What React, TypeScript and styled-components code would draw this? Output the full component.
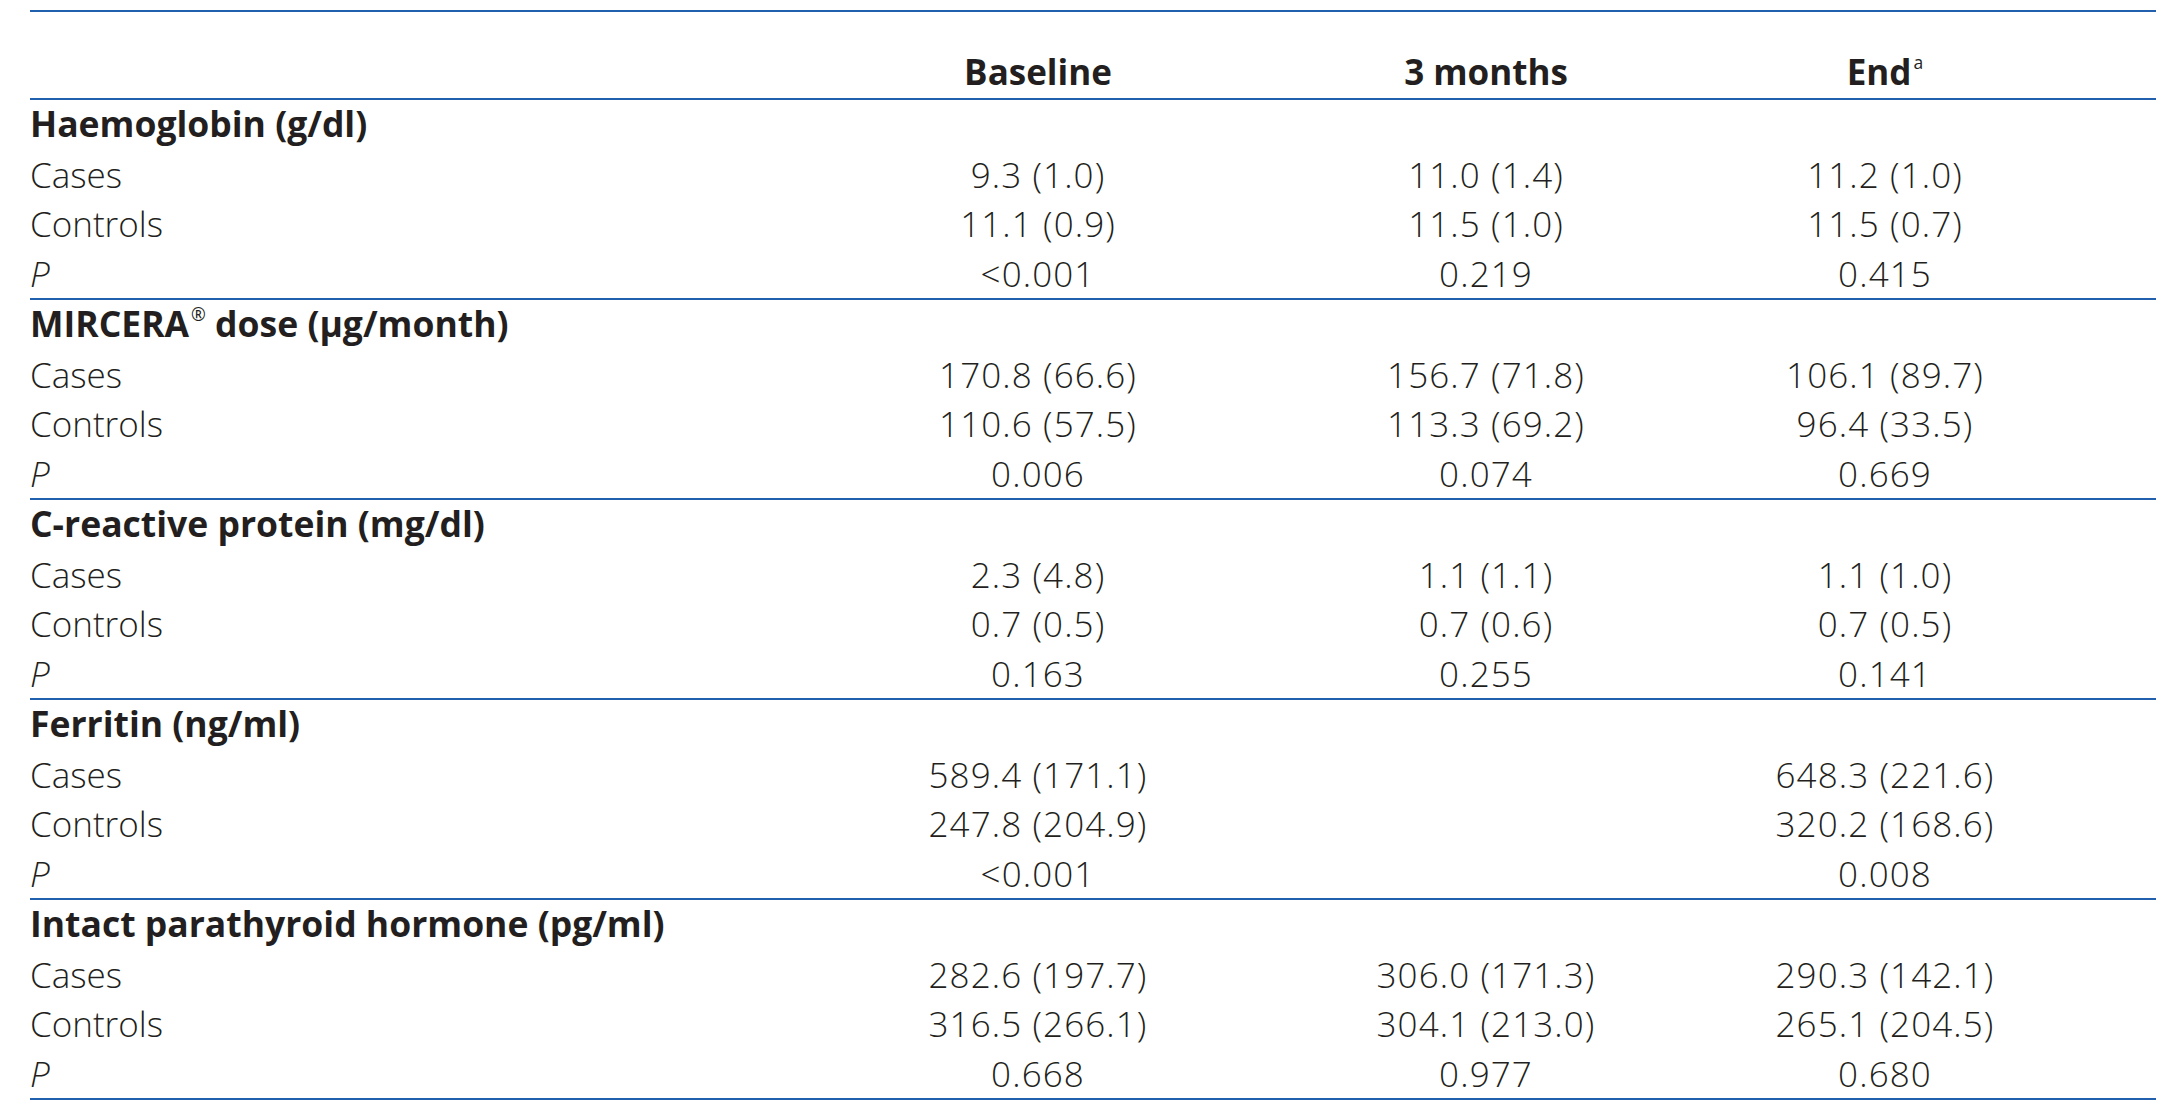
import React from 'react';
import styled, { createGlobalStyle } from 'styled-components';

const GlobalStyle = createGlobalStyle`
  html, body {
    margin: 0;
    background: #ffffff;
  }
  body {
    font-family: 'Open Sans', 'Noto Sans', sans-serif;
    color: #231f20;
  }
`;

const columns = '688px 640px 256px 542px';
const ruleColor = '#2060ac';

const TableStyled = styled.div`
  width: 2126px;
  margin: 10px 0 0 30px;
  border-top: 2px solid ${ruleColor};
`;

const HeadRow = styled.div`
  display: grid;
  grid-template-columns: ${columns};
  align-items: end;
  height: 88px;
  box-sizing: border-box;
  border-bottom: 2px solid ${ruleColor};
`;

const HeadCell = styled.div<{ $center?: boolean }>`
  font-size: 35px;
  font-weight: 700;
  line-height: 50px;
  padding-bottom: 1px;
  text-align: ${({ $center }) => ($center ? 'center' : 'left')};
  white-space: nowrap;
`;

const GroupStyled = styled.div`
  display: grid;
  grid-template-columns: ${columns};
  grid-template-rows: repeat(4, 1fr);
  height: 200px;
  box-sizing: border-box;
  border-bottom: 2px solid ${ruleColor};
`;

const GroupTitle = styled.div`
  grid-column: 1 / -1;
  font-size: 35.5px;
  font-weight: 700;
  line-height: 46px;
  white-space: nowrap;
`;

const LabelCell = styled.div<{ $italic?: boolean }>`
  font-size: 35px;
  font-weight: 350;
  line-height: 49px;
  font-style: ${({ $italic }) => ($italic ? 'italic' : 'normal')};
  white-space: nowrap;
`;

const ValueCell = styled.div`
  font-size: 35px;
  font-weight: 350;
  line-height: 49px;
  letter-spacing: 1.1px;
  text-align: center;
  white-space: nowrap;
`;

const Sup = styled.sup`
  font-size: 0.5em;
  font-weight: 400;
  vertical-align: 0.9em;
  line-height: 0;
  margin-left: 2px;
  letter-spacing: 0;
`;

type Row = { label: string; italic?: boolean; values: string[] };
type Group = { title: React.ReactNode; rows: Row[] };

const groups: Group[] = [
  {
    title: 'Haemoglobin (g/dl)',
    rows: [
      { label: 'Cases', values: ['9.3 (1.0)', '11.0 (1.4)', '11.2 (1.0)'] },
      { label: 'Controls', values: ['11.1 (0.9)', '11.5 (1.0)', '11.5 (0.7)'] },
      { label: 'P', italic: true, values: ['<0.001', '0.219', '0.415'] },
    ],
  },
  {
    title: (
      <>
        MIRCERA<Sup>®</Sup> dose (µg/month)
      </>
    ),
    rows: [
      { label: 'Cases', values: ['170.8 (66.6)', '156.7 (71.8)', '106.1 (89.7)'] },
      { label: 'Controls', values: ['110.6 (57.5)', '113.3 (69.2)', '96.4 (33.5)'] },
      { label: 'P', italic: true, values: ['0.006', '0.074', '0.669'] },
    ],
  },
  {
    title: 'C-reactive protein (mg/dl)',
    rows: [
      { label: 'Cases', values: ['2.3 (4.8)', '1.1 (1.1)', '1.1 (1.0)'] },
      { label: 'Controls', values: ['0.7 (0.5)', '0.7 (0.6)', '0.7 (0.5)'] },
      { label: 'P', italic: true, values: ['0.163', '0.255', '0.141'] },
    ],
  },
  {
    title: 'Ferritin (ng/ml)',
    rows: [
      { label: 'Cases', values: ['589.4 (171.1)', '', '648.3 (221.6)'] },
      { label: 'Controls', values: ['247.8 (204.9)', '', '320.2 (168.6)'] },
      { label: 'P', italic: true, values: ['<0.001', '', '0.008'] },
    ],
  },
  {
    title: 'Intact parathyroid hormone (pg/ml)',
    rows: [
      { label: 'Cases', values: ['282.6 (197.7)', '306.0 (171.3)', '290.3 (142.1)'] },
      { label: 'Controls', values: ['316.5 (266.1)', '304.1 (213.0)', '265.1 (204.5)'] },
      { label: 'P', italic: true, values: ['0.668', '0.977', '0.680'] },
    ],
  },
];

const App = () => {
  return (
    <>
      <GlobalStyle />
      <TableStyled>
        <HeadRow>
          <HeadCell />
          <HeadCell $center>Baseline</HeadCell>
          <HeadCell $center>3 months</HeadCell>
          <HeadCell $center>
            End<Sup>a</Sup>
          </HeadCell>
        </HeadRow>
        {groups.map((group, i) => (
          <GroupStyled key={i}>
            <GroupTitle>{group.title}</GroupTitle>
            {group.rows.map((row) => (
              <React.Fragment key={row.label}>
                <LabelCell $italic={row.italic}>{row.label}</LabelCell>
                {row.values.map((value, j) => (
                  <ValueCell key={j}>{value}</ValueCell>
                ))}
              </React.Fragment>
            ))}
          </GroupStyled>
        ))}
      </TableStyled>
    </>
  );
};

export default App;
